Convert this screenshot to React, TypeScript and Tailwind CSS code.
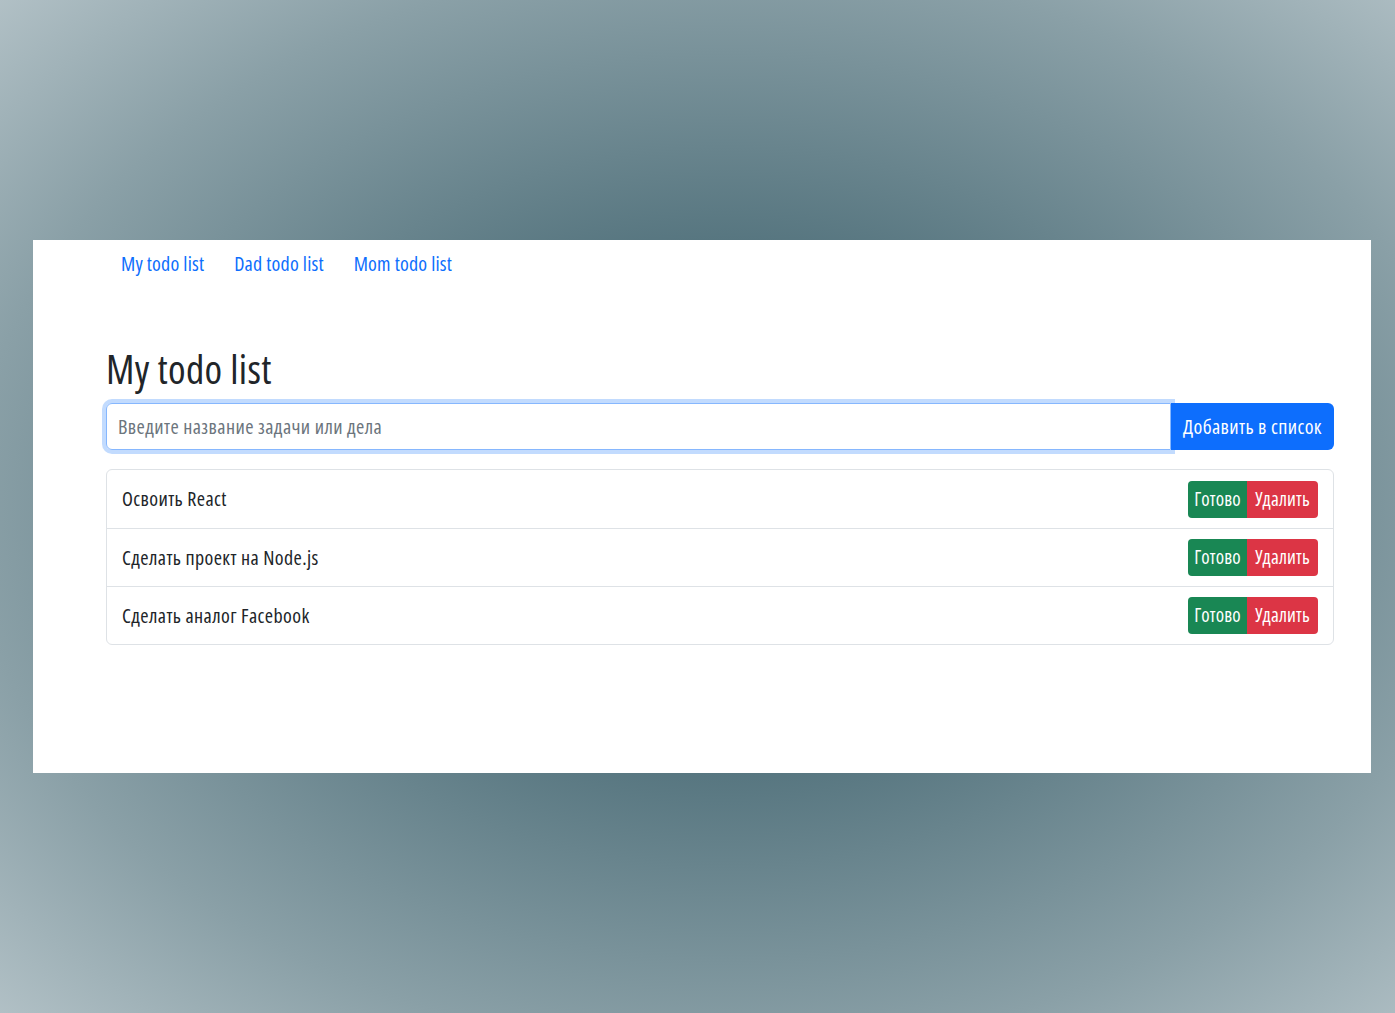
import React from "react";

const todos = ["Освоить React", "Сделать проект на Node.js", "Сделать аналог Facebook"];

export default function App() {
  return (
    <div className="min-h-[1013px] w-full flex flex-col bg-[radial-gradient(ellipse_75%_75%_at_52%_50%,#45666f_0%,#577680_35%,#8aa0a7_72%,#b7c5ca_100%)] font-['Open_Sans','Noto_Sans',sans-serif] font-stretch-[75%] tracking-[0.4px]">
      <div className="h-[240px]" />
      <div className="mx-[33px] mr-[24px] h-[533px] bg-white pl-[73px] pr-[37px]">
        <nav className="flex h-[48px] items-center tracking-[0.2px]">
          <a className="px-[15px] text-[20px] text-[#0d6efd]">My todo list</a>
          <a className="px-[15px] text-[20px] text-[#0d6efd]">Dad todo list</a>
          <a className="px-[15px] text-[20px] text-[#0d6efd]">Mom todo list</a>
        </nav>
        <h1 className="mt-[57px] h-[58px] text-[40px] leading-[48px] text-[#212529] tracking-[0.35px]">My todo list</h1>
        <div className="flex h-[47px]">
          <div className="flex-1 flex items-center rounded-l-[6px] border border-[#86b7fe] pl-[11px] shadow-[0_0_0_4px_rgba(13,110,253,0.25)] text-[20px] text-[#6c757d]">
            Введите название задачи или дела
          </div>
          <button className="w-[163px] rounded-r-[6px] bg-[#0d6efd] text-[20px] text-white">Добавить в список</button>
        </div>
        <ul className="mt-[19px] rounded-[6px] border border-[#dee2e6]">
          {todos.map((t, i) => (
            <li
              key={t}
              className={
                "flex h-[58px] items-center justify-between pl-[15px] pr-[15px] text-[20px] text-[#212529] " +
                (i > 0 ? "border-t border-[#dee2e6]" : "")
              }
            >
              <span>{t}</span>
              <div className="flex h-[37px] overflow-hidden rounded-[4px] tracking-[0.15px]">
                <button className="w-[59px] bg-[#198754] text-[19px] text-white">Готово</button>
                <button className="w-[71px] bg-[#dc3545] text-[19px] text-white">Удалить</button>
              </div>
            </li>
          ))}
        </ul>
      </div>
    </div>
  );
}
